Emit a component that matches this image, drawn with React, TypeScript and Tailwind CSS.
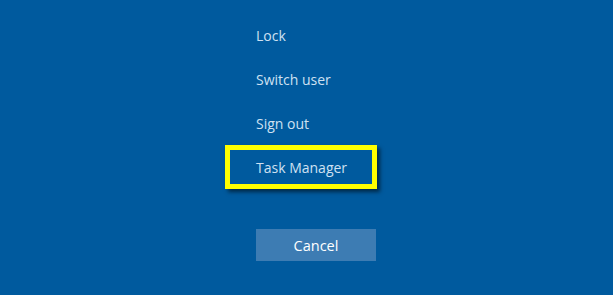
export default function App() {
  const items = ['Lock', 'Switch user', 'Sign out']
  return (
    <div className="h-[295px] w-[613px] overflow-hidden bg-[#005a9e] pt-[13px] font-['Open_Sans','Noto_Sans',sans-serif] text-[14px] text-[#cfe1f2]">
      <div className="ml-[256px] flex w-[120px] flex-col">
        {items.map((label) => (
          <div key={label} className="flex h-[44px] items-center whitespace-nowrap pt-[1px]">
            {label}
          </div>
        ))}
        <div className="relative flex h-[44px] items-center whitespace-nowrap pt-[1px]">
          Task Manager
          <div className="absolute -left-[31px] top-0 h-[44px] w-[152px] border-[5px] border-[#ffff00] shadow-[3px_3px_4px_rgba(0,0,0,0.55)]" />
        </div>
        <button className="mt-[40px] flex h-[32px] w-[120px] items-center justify-center bg-[#3d7cb3] pt-[1px] text-[14.5px] text-white">
          Cancel
        </button>
      </div>
    </div>
  )
}
